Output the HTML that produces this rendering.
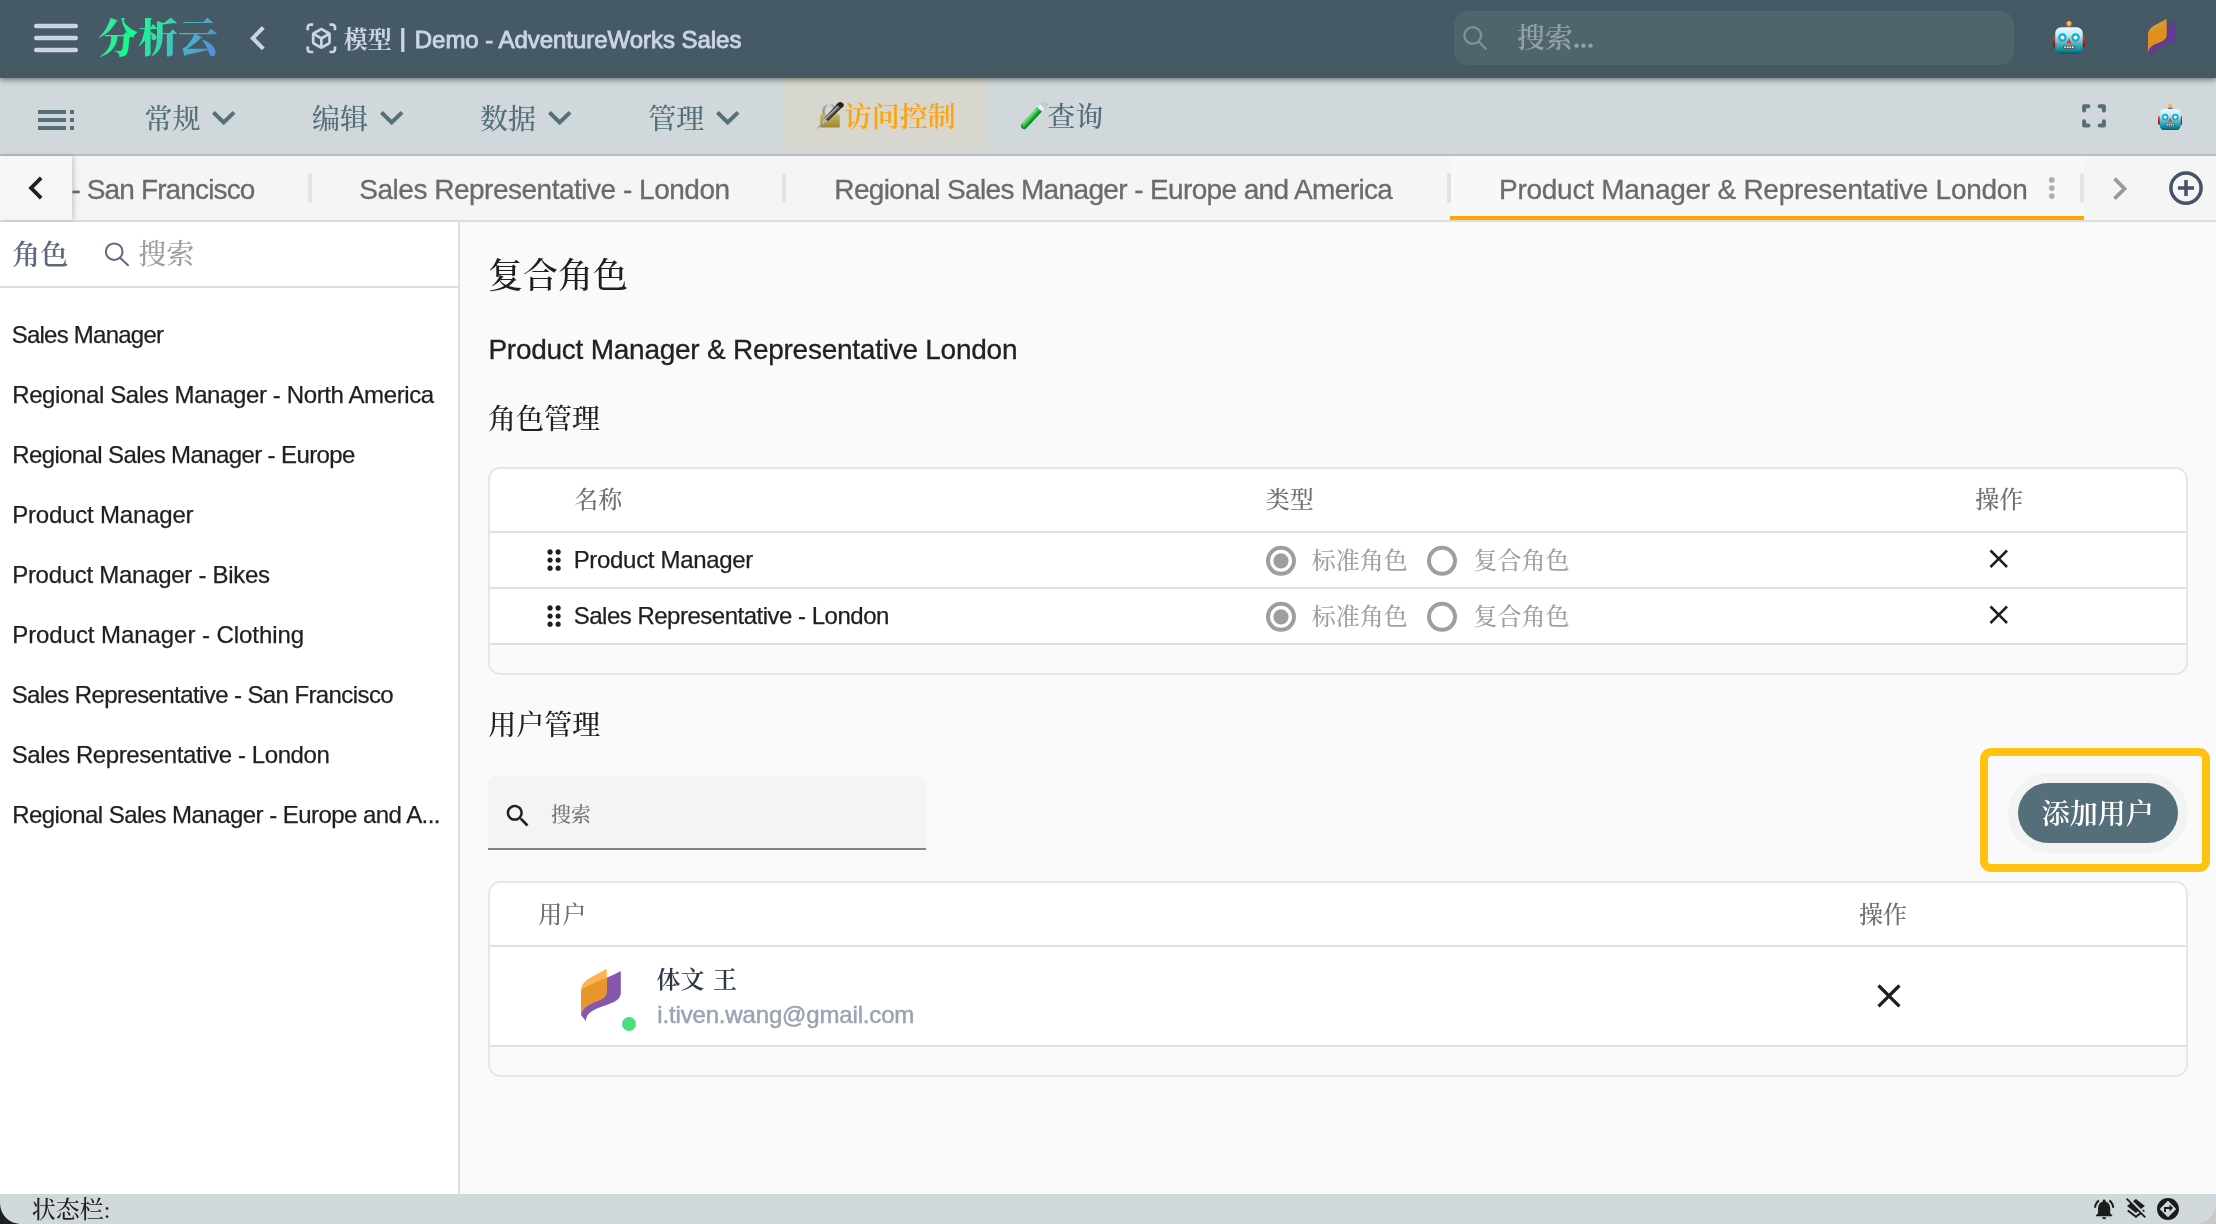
<!DOCTYPE html>
<html lang="zh-CN"><head><meta charset="utf-8"><title>模型 | Demo - AdventureWorks Sales</title>
<style>
html,body{margin:0;padding:0}
body{width:2216px;height:1224px;overflow:hidden;position:relative;background:#fafafa;font-family:"Liberation Sans","Noto Serif CJK SC",sans-serif}
#app{position:absolute;left:0;top:0;width:2216px;height:1224px;overflow:hidden;will-change:transform}
.ab{position:absolute;display:block}
.z6{position:absolute;left:0;top:0;z-index:6}
.lt{position:absolute;display:block;white-space:nowrap;line-height:1;font-family:"Liberation Sans","Noto Serif CJK SC",sans-serif}
.ck{position:absolute;display:block;white-space:nowrap;line-height:1;font-weight:500;font-family:"Liberation Serif","Noto Serif CJK SC",serif}
.tb{box-sizing:border-box;border:2px solid #e4e6ea;border-radius:12.500px;background:#fafafa;overflow:hidden}
.tb .hd,.tb .rw{background:#fff;border-bottom:2px solid #e0e0e0}
</style></head>
<body>
<div id="app">
<div class="ab" style="left:0;top:0;width:2216px;height:78px;background:#455a64;box-shadow:0 2px 6px rgba(0,0,0,.45);z-index:5"></div>
<div class="z6">
<svg class="ab" style="left:30px;top:20px" width="52" height="36" viewBox="30 20 52 36" fill="none" stroke="#cbd5e1" stroke-width="4.400" stroke-linecap="round"><path d="M36.200 26H75.800M36.200 38H75.800M36.200 50H75.800"/></svg>
<span id="logo" class="ck" style="left:98px;top:18px;font-size:40px;font-weight:900;line-height:42px;background:linear-gradient(115deg,#45dca8 0%,#16fb8d 28%,#2fe0a8 48%,#45b8c4 68%,#5a84dc 100%);-webkit-background-clip:text;background-clip:text;color:transparent;-webkit-text-fill-color:transparent">分析云</span>
<svg class="ab" style="left:246px;top:22px" width="24" height="32" viewBox="246 22 24 32" fill="none" stroke="#cbd5e1" stroke-width="4" stroke-linecap="butt" stroke-linejoin="miter"><path d="M263.300 27.500L252.800 38.200L263.300 48.800"/></svg>
<svg class="ab" style="left:304.64px;top:22.14px" width="32.73" height="32.73" viewBox="0 0 24 24" fill="#cbd5e1" ><path d="M3 4c0-.55.45-1 1-1h2V1H4C2.34 1 1 2.34 1 4v2h2V4zm0 16v-2H1v2c0 1.660 1.340 3 3 3h2v-2H4c-.55 0-1-.45-1-1zM20 1h-2v2h2c.55 0 1 .45 1 1v2h2V4c0-1.660-1.340-3-3-3zm1 19c0 .55-.45 1-1 1h-2v2h2c1.660 0 3-1.340 3-3v-2h-2v2zm-2-5.130V9.130c0-.72-.38-1.380-1-1.730l-5-2.880c-.31-.18-.65-.27-1-.27s-.69.09-1 .27L6 7.390c-.62.360-1 1.020-1 1.740v5.740c0 .72.38 1.380 1 1.730l5 2.880c.31.18.65.27 1 .27s.69-.09 1-.27l5-2.880c.62-.35 1-1.010 1-1.730zm-8 2.300l-4-2.300v-4.630l4 2.330v4.600zm1-6.330L8.040 8.530 12 6.250l3.960 2.280L12 10.840zm5 4.030l-4 2.300v-4.600l4-2.330v4.630z"/></svg>
<span id="c1" class="ck" style="left:343.70px;top:28.45px;font-size:24px;color:#cbd5e1;font-weight:700;">模型</span>
<span id="t2" class="lt" style="left:399.20px;top:26.44px;font-size:25px;color:#cbd5e1;letter-spacing:0.000px;font-weight:700;">|</span>
<span id="t3" class="lt" style="left:414.80px;top:27.58px;font-size:24px;color:#cbd5e1;letter-spacing:-0.042px;-webkit-text-stroke:0.9px #cbd5e1;">Demo - AdventureWorks Sales</span>
<div class="ab" style="left:1454px;top:11px;width:560px;height:54px;border-radius:14px;background:#50646e"></div>
<svg class="ab" style="left:1460px;top:22px" width="30" height="30" viewBox="1460 22 30 30" fill="none" stroke="#7f919b" stroke-width="2.300" stroke-linecap="round"><circle cx="1472.700" cy="35.500" r="8.300"/><path d="M1478.800 41.700L1485.800 48.700"/></svg>
<span id="c4" class="ck" style="left:1516.90px;top:24.80px;font-size:28px;color:#8fa1aa;font-weight:600;">搜索...</span>
<svg class="ab" style="left:2052.50px;top:21.00px" width="32.00" height="33.00" viewBox="0 0 36 36" preserveAspectRatio="none">
<defs><linearGradient id="rbh" x1="0" y1="0" x2="0" y2="1"><stop offset="0" stop-color="#e6fbfa"/><stop offset=".3" stop-color="#c2ecec"/><stop offset=".62" stop-color="#4fb3bd"/><stop offset=".85" stop-color="#0d8fa0"/><stop offset="1" stop-color="#02596a"/></linearGradient>
<radialGradient id="rba" cx=".5" cy=".35" r=".6"><stop offset="0" stop-color="#ffd54a"/><stop offset="1" stop-color="#ff8f00"/></radialGradient>
<linearGradient id="rbe" x1="0" y1="0" x2="0" y2="1"><stop offset="0" stop-color="#ff2d2d"/><stop offset="1" stop-color="#7a0c0c"/></linearGradient></defs>
<rect x="0" y="17" width="5" height="11.500" rx="2" fill="url(#rbe)"/><rect x="31" y="17" width="5" height="11.500" rx="2" fill="url(#rbe)"/>
<path d="M13.800 9.500Q13.800 4.800 18 4.800Q22.200 4.800 22.200 9.500Z" fill="#7b4fa8"/>
<circle cx="18" cy="2.900" r="2.900" fill="url(#rba)"/>
<rect x="2.500" y="6.800" width="31" height="29.200" rx="6.500" fill="url(#rbh)"/>
<circle cx="10.600" cy="18" r="4.700" fill="#08a9d8"/><circle cx="25.400" cy="18" r="4.700" fill="#08a9d8"/>
<circle cx="10.600" cy="18" r="2.300" fill="#fff"/><circle cx="25.400" cy="18" r="2.300" fill="#fff"/>
<path d="M18 18.500 L21 24.500 L15 24.500Z" fill="#ee3344"/>
<rect x="11.500" y="27" width="13" height="3.200" rx=".8" fill="#5a3a30"/>
<rect x="12.700" y="27.600" width="2" height="2" fill="#f2ece6"/><rect x="15.600" y="27.600" width="2" height="2" fill="#f2ece6"/><rect x="18.500" y="27.600" width="2" height="2" fill="#f2ece6"/><rect x="21.400" y="27.600" width="2" height="2" fill="#f2ece6"/>
</svg>
<svg class="ab" style="left:2147.50px;top:18.50px" width="28.70" height="37.30" viewBox="0 0 580 760" preserveAspectRatio="none">
<defs><clipPath id="lfc1"><path d="M375 0C250 75 100 120 30 220C10 250 0 280 0 310L0 670C10 600 60 550 130 515C230 465 375 440 375 330Z"/></clipPath></defs>
<path d="M580 30C455 105 300 150 200 200C100 250 0 280 0 330L0 670L70 760C70 680 130 620 250 570C400 510 580 480 580 350Z" fill="#643a93"/><path d="M375 0C250 75 100 120 30 220C10 250 0 280 0 310L0 670C10 600 60 550 130 515C230 465 375 440 375 330Z" fill="#db9a30"/><path d="M580 30C455 105 300 150 200 200C100 250 0 280 0 330L0 670L70 760C70 680 130 620 250 570C400 510 580 480 580 350Z" fill="#e0901e" clip-path="url(#lfc1)"/>
</svg>
</div>
<div class="ab" style="left:0;top:78px;width:2216px;height:76px;background:#d0d8db"></div>
<div class="ab" style="left:0;top:154px;width:2216px;height:2px;background:#b4bfc4"></div>
<div class="ab" style="left:784px;top:78px;width:204px;height:73.500px;background:#d7d7cf"></div>
<svg class="ab" style="left:32.00px;top:96.00px" width="48.00" height="48.00" viewBox="0 0 24 24" fill="#546e7a" ><path d="M3 9h14V7H3v2zm0 4h14v-2H3v2zm0 4h14v-2H3v2zm16 0h2v-2h-2v2zm0-10v2h2V7h-2zm0 6h2v-2h-2v2z"/></svg>
<span id="c5" class="ck" style="left:144.50px;top:105.50px;font-size:28px;color:#546e7a;font-weight:500;">常规</span>
<svg class="ab" style="left:210.30px;top:107.400px" width="28" height="20" viewBox="0 0 28 20" fill="none" stroke="#546e7a" stroke-width="4"><path d="M3.400 5.400L13.700 15.500L24 5.400"/></svg>
<span id="c6" class="ck" style="left:312.10px;top:105.50px;font-size:28px;color:#546e7a;font-weight:500;">编辑</span>
<svg class="ab" style="left:377.90px;top:107.400px" width="28" height="20" viewBox="0 0 28 20" fill="none" stroke="#546e7a" stroke-width="4"><path d="M3.400 5.400L13.700 15.500L24 5.400"/></svg>
<span id="c7" class="ck" style="left:479.90px;top:105.50px;font-size:28px;color:#546e7a;font-weight:500;">数据</span>
<svg class="ab" style="left:545.70px;top:107.400px" width="28" height="20" viewBox="0 0 28 20" fill="none" stroke="#546e7a" stroke-width="4"><path d="M3.400 5.400L13.700 15.500L24 5.400"/></svg>
<span id="c8" class="ck" style="left:648.20px;top:105.50px;font-size:28px;color:#546e7a;font-weight:500;">管理</span>
<svg class="ab" style="left:714.00px;top:107.400px" width="28" height="20" viewBox="0 0 28 20" fill="none" stroke="#546e7a" stroke-width="4"><path d="M3.400 5.400L13.700 15.500L24 5.400"/></svg>
<span id="c9" class="ck" style="left:843.80px;top:104.15px;font-size:28px;color:#ffa30a;font-weight:600;">访问控制</span>
<span id="c10" class="ck" style="left:1047.20px;top:104.15px;font-size:28px;color:#546e7a;font-weight:500;">查询</span>
<svg class="ab" style="left:816px;top:101px" width="30" height="30" viewBox="0 0 30 30">
<defs><linearGradient id="lkb" x1="0" y1="0" x2="0" y2="1"><stop offset="0" stop-color="#cdb75a"/><stop offset="1" stop-color="#9c862f"/></linearGradient>
<linearGradient id="lks" x1="0" y1="0" x2="1" y2="0"><stop offset="0" stop-color="#8f979e"/><stop offset=".45" stop-color="#d3d9de"/><stop offset="1" stop-color="#8f979e"/></linearGradient>
<linearGradient id="lkp" x1="0" y1="0" x2="1" y2="1"><stop offset=".41" stop-color="#2b2725"/><stop offset=".47" stop-color="#b8b8b8"/><stop offset=".53" stop-color="#4c4744"/><stop offset=".62" stop-color="#1d1a18"/></linearGradient></defs>
<path d="M7.700 15V9.600a5.700 5.700 0 0 1 11.400 0V15" fill="none" stroke="url(#lks)" stroke-width="2.500"/>
<rect x="4.200" y="13.600" width="19.600" height="13" rx="1.200" fill="url(#lkb)"/>
<path d="M1.100 27.600L8.200 17.600L11.800 19.800Z" fill="#aab6c2"/>
<path d="M1.100 27.600L7 21.800" stroke="#6c7680" stroke-width=".7"/>
<path d="M22.200 1.900C24.600 .2 28.700 2.500 27.300 5.300L12 19.900L8.200 17.200Z" fill="url(#lkp)"/>
<path d="M22.200 1.900C24.600 .2 28.700 2.500 27.300 5.300L25.400 7.100L20.100 3.700Z" fill="#23201e"/>
</svg>
<svg class="ab" style="left:1019px;top:100px" width="31" height="31" viewBox="0 0 31 31">
<path d="M5.200 26L23.500 6.400" stroke="#c3cfce" stroke-width="7" stroke-linecap="round"/>
<path d="M5.200 26L20.300 9.800" stroke="#0d8f27" stroke-width="6.200" stroke-linecap="round"/>
<path d="M4.600 25.400L19.400 9.500" stroke="#1fd03e" stroke-width="3" stroke-linecap="round"/>
<path d="M4.300 23.800L17.700 9.400" stroke="#b9ffc8" stroke-width="1" stroke-linecap="round"/>
<path d="M20.600 9.500L23.800 6.100" stroke="#e6ecec" stroke-width="6.600"/>
<path d="M19.700 8.800L22.600 5.700" stroke="#ffffff" stroke-width="1.600"/>
<path d="M20.800 3L27.100 8.900" stroke="#d5c6d2" stroke-width="1.800" stroke-linecap="round"/>
<circle cx="26.200" cy="2.800" r=".9" fill="#7fe08f"/><circle cx="28" cy="5" r=".9" fill="#7fe08f"/>
</svg>
<svg class="ab" style="left:2080px;top:102px" width="28" height="28" viewBox="2080 102 28 28" fill="none" stroke="#546e7a" stroke-width="4" stroke-linecap="round" stroke-linejoin="round"><path d="M2084.100 110.500V106.200H2088.400M2099.600 106.200H2103.900V110.500M2103.900 121.300V125.600H2099.600M2088.400 125.600H2084.100V121.300"/></svg>
<svg class="ab" style="left:2157.80px;top:103.80px" width="24.50" height="26.20" viewBox="0 0 36 36" preserveAspectRatio="none">
<defs><linearGradient id="rbh2" x1="0" y1="0" x2="0" y2="1"><stop offset="0" stop-color="#e6fbfa"/><stop offset=".3" stop-color="#c2ecec"/><stop offset=".62" stop-color="#4fb3bd"/><stop offset=".85" stop-color="#0d8fa0"/><stop offset="1" stop-color="#02596a"/></linearGradient>
<radialGradient id="rba2" cx=".5" cy=".35" r=".6"><stop offset="0" stop-color="#ffd54a"/><stop offset="1" stop-color="#ff8f00"/></radialGradient>
<linearGradient id="rbe2" x1="0" y1="0" x2="0" y2="1"><stop offset="0" stop-color="#ff2d2d"/><stop offset="1" stop-color="#7a0c0c"/></linearGradient></defs>
<rect x="0" y="17" width="5" height="11.500" rx="2" fill="url(#rbe2)"/><rect x="31" y="17" width="5" height="11.500" rx="2" fill="url(#rbe2)"/>
<path d="M13.800 9.500Q13.800 4.800 18 4.800Q22.200 4.800 22.200 9.500Z" fill="#7b4fa8"/>
<circle cx="18" cy="2.900" r="2.900" fill="url(#rba2)"/>
<rect x="2.500" y="6.800" width="31" height="29.200" rx="6.500" fill="url(#rbh2)"/>
<circle cx="10.600" cy="18" r="4.700" fill="#08a9d8"/><circle cx="25.400" cy="18" r="4.700" fill="#08a9d8"/>
<circle cx="10.600" cy="18" r="2.300" fill="#fff"/><circle cx="25.400" cy="18" r="2.300" fill="#fff"/>
<path d="M18 18.500 L21 24.500 L15 24.500Z" fill="#ee3344"/>
<rect x="11.500" y="27" width="13" height="3.200" rx=".8" fill="#5a3a30"/>
<rect x="12.700" y="27.600" width="2" height="2" fill="#f2ece6"/><rect x="15.600" y="27.600" width="2" height="2" fill="#f2ece6"/><rect x="18.500" y="27.600" width="2" height="2" fill="#f2ece6"/><rect x="21.400" y="27.600" width="2" height="2" fill="#f2ece6"/>
</svg>
<div class="ab" style="left:0;top:156px;width:2216px;height:64px;background:#f5f5f5"></div>
<div class="ab" style="left:0;top:220px;width:2216px;height:2px;background:#dcdcdc"></div>
<div class="ab" style="left:1451px;top:156px;width:633px;height:64px;background:#f8f8f8"></div>
<div class="ab" style="left:1450px;top:216px;width:634px;height:4px;background:#ffa600"></div>
<div class="ab" style="left:307.6px;top:173.200px;width:4px;height:29.600px;background:#e3e3e3;border-radius:2px"></div>
<div class="ab" style="left:782px;top:173.200px;width:4px;height:29.600px;background:#e3e3e3;border-radius:2px"></div>
<div class="ab" style="left:1446.8px;top:173.200px;width:4px;height:29.600px;background:#e3e3e3;border-radius:2px"></div>
<div class="ab" style="left:2079.9px;top:173.200px;width:4px;height:29.600px;background:#e3e3e3;border-radius:2px"></div>
<span id="t11" class="lt" style="left:71.40px;top:176.30px;font-size:28px;color:#6b6b6b;letter-spacing:-0.864px;-webkit-text-stroke:0.3px #6b6b6b;">- San Francisco</span>
<span id="t12" class="lt" style="left:359.30px;top:176.30px;font-size:28px;color:#6b6b6b;letter-spacing:-0.489px;-webkit-text-stroke:0.3px #6b6b6b;">Sales Representative - London</span>
<span id="t13" class="lt" style="left:834.30px;top:176.30px;font-size:28px;color:#6b6b6b;letter-spacing:-0.633px;-webkit-text-stroke:0.3px #6b6b6b;">Regional Sales Manager - Europe and America</span>
<span id="t14" class="lt" style="left:1499.00px;top:176.30px;font-size:28px;color:#6b6b6b;letter-spacing:-0.258px;-webkit-text-stroke:0.3px #6b6b6b;">Product Manager &amp; Representative London</span>
<div class="ab" style="left:0;top:156px;width:72px;height:64px;background:#f6f6f6;box-shadow:2px 0 5px rgba(0,0,0,.18)"></div>
<svg class="ab" style="left:13.47px;top:165.40px" width="45.99" height="45.99" viewBox="0 0 24 24" fill="#212121" ><path d="M15.41 7.41L14 6l-6 6 6 6 1.41-1.41L10.83 12z"/></svg>
<svg class="ab" style="left:2046px;top:174px" width="12" height="28" viewBox="2046 174 12 28" fill="#b0b0b0"><circle cx="2051.800" cy="180" r="2.900"/><circle cx="2051.800" cy="188.050" r="2.900"/><circle cx="2051.800" cy="196.100" r="2.900"/></svg>
<svg class="ab" style="left:2096.77px;top:165.56px" width="45.34" height="45.34" viewBox="0 0 24 24" fill="#999999" ><path d="M10 6L8.59 7.41 13.17 12l-4.58 4.59L10 18l6-6z"/></svg>
<svg class="ab" style="left:2166px;top:168px" width="40" height="40" viewBox="2166 168 40 40" fill="none" stroke="#465268" stroke-width="3.500"><circle cx="2186" cy="188.050" r="15.100"/><path d="M2186 180V196.100M2177.900 188.050H2194.100"/></svg>
<div class="ab" style="left:0;top:222px;width:458px;height:972px;background:#fff"></div>
<div class="ab" style="left:458px;top:222px;width:2px;height:972px;background:#dedede"></div>
<div class="ab" style="left:0;top:286px;width:458px;height:2px;background:#dedede"></div>
<span id="c15" class="ck" style="left:12.20px;top:241.75px;font-size:28px;color:#5f687e;font-weight:600;">角色</span>
<svg class="ab" style="left:102px;top:240px" width="30" height="30" viewBox="102 240 30 30" fill="none" stroke="#5f687e" stroke-width="2" stroke-linecap="round"><circle cx="114.200" cy="251.700" r="8.300"/><path d="M120.600 258.200L128 265.200"/></svg>
<span id="c16" class="ck" style="left:138.20px;top:241.15px;font-size:28px;color:#9e9e9e;">搜索</span>
<span id="t17" class="lt" style="left:11.70px;top:323.28px;font-size:24px;color:#1f1f1f;letter-spacing:-0.758px;-webkit-text-stroke:0.25px #1f1f1f;">Sales Manager</span>
<span id="t18" class="lt" style="left:12.20px;top:383.28px;font-size:24px;color:#1f1f1f;letter-spacing:-0.384px;-webkit-text-stroke:0.25px #1f1f1f;">Regional Sales Manager - North America</span>
<span id="t19" class="lt" style="left:12.20px;top:443.28px;font-size:24px;color:#1f1f1f;letter-spacing:-0.613px;-webkit-text-stroke:0.25px #1f1f1f;">Regional Sales Manager - Europe</span>
<span id="t20" class="lt" style="left:12.20px;top:503.28px;font-size:24px;color:#1f1f1f;letter-spacing:-0.193px;-webkit-text-stroke:0.25px #1f1f1f;">Product Manager</span>
<span id="t21" class="lt" style="left:12.20px;top:563.28px;font-size:24px;color:#1f1f1f;letter-spacing:-0.282px;-webkit-text-stroke:0.25px #1f1f1f;">Product Manager - Bikes</span>
<span id="t22" class="lt" style="left:12.20px;top:623.28px;font-size:24px;color:#1f1f1f;letter-spacing:-0.064px;-webkit-text-stroke:0.25px #1f1f1f;">Product Manager - Clothing</span>
<span id="t23" class="lt" style="left:11.70px;top:683.28px;font-size:24px;color:#1f1f1f;letter-spacing:-0.597px;-webkit-text-stroke:0.25px #1f1f1f;">Sales Representative - San Francisco</span>
<span id="t24" class="lt" style="left:11.70px;top:743.28px;font-size:24px;color:#1f1f1f;letter-spacing:-0.407px;-webkit-text-stroke:0.25px #1f1f1f;">Sales Representative - London</span>
<span id="t25" class="lt" style="left:12.20px;top:803.28px;font-size:24px;color:#1f1f1f;letter-spacing:-0.546px;-webkit-text-stroke:0.25px #1f1f1f;">Regional Sales Manager - Europe and A...</span>
<div class="ab" style="left:460px;top:222px;width:1756px;height:972px;background:#fafafa"></div>
<span id="c26" class="ck" style="left:488.10px;top:258.50px;font-size:35px;color:#1f1f1f;font-weight:500;">复合角色</span>
<span id="t27" class="lt" style="left:488.40px;top:335.80px;font-size:28px;color:#212121;letter-spacing:-0.250px;-webkit-text-stroke:0.3px #212121;">Product Manager &amp; Representative London</span>
<span id="c28" class="ck" style="left:487.90px;top:406.40px;font-size:28px;color:#1f1f1f;font-weight:500;">角色管理</span>
<div class="ab tb" style="left:488px;top:467px;width:1700px;height:208px"><div class="hd" style="height:62px"></div><div class="rw" style="height:54px"></div><div class="rw" style="height:54px"></div></div>
<span id="c29" class="ck" style="left:574.20px;top:487.70px;font-size:24px;color:#707070;font-weight:500;">名称</span>
<span id="c30" class="ck" style="left:1265.70px;top:488.20px;font-size:24px;color:#707070;font-weight:500;">类型</span>
<span id="c31" class="ck" style="left:1975.20px;top:488.10px;font-size:24px;color:#707070;font-weight:500;">操作</span>
<svg class="ab" style="left:537.98px;top:543.83px" width="32.21" height="32.21" viewBox="0 0 24 24" fill="#1f1f1f" ><path d="M11 18c0 1.1-.9 2-2 2s-2-.9-2-2 .9-2 2-2 2 .9 2 2zm-2-8c-1.1 0-2 .9-2 2s.9 2 2 2 2-.9 2-2-.9-2-2-2zm0-6c-1.1 0-2 .9-2 2s.9 2 2 2 2-.9 2-2-.9-2-2-2zm6 4c1.1 0 2-.9 2-2s-.9-2-2-2-2 .9-2 2 .9 2 2 2zm0 2c-1.1 0-2 .9-2 2s.9 2 2 2 2-.9 2-2-.9-2-2-2zm0 6c-1.1 0-2 .9-2 2s.9 2 2 2 2-.9 2-2-.9-2-2-2z"/></svg>
<span id="t32" class="lt" style="left:573.70px;top:548.18px;font-size:24px;color:#1f1f1f;letter-spacing:-0.321px;-webkit-text-stroke:0.25px #1f1f1f;">Product Manager</span>
<svg class="ab" style="left:1264px;top:544px" width="34" height="34" viewBox="0 0 34 34"><circle cx="17" cy="16.800" r="13" fill="none" stroke="#9e9e9e" stroke-width="4"/><circle cx="17" cy="16.800" r="7.600" fill="#9e9e9e"/></svg>
<span id="c33" class="ck" style="left:1311.70px;top:549.30px;font-size:24px;color:#a0a0a0;">标准角色</span>
<svg class="ab" style="left:1425px;top:544px" width="34" height="34" viewBox="0 0 34 34"><circle cx="17" cy="16.800" r="13" fill="none" stroke="#9e9e9e" stroke-width="4"/></svg>
<span id="c34" class="ck" style="left:1473.50px;top:549.30px;font-size:24px;color:#a0a0a0;">复合角色</span>
<svg class="ab" style="left:1983.23px;top:543.43px" width="31.54" height="31.54" viewBox="0 0 24 24" fill="#1f1f1f" ><path d="M19 6.41L17.59 5 12 10.59 6.41 5 5 6.41 10.59 12 5 17.59 6.41 19 12 13.41 17.59 19 19 17.59 13.41 12z"/></svg>
<svg class="ab" style="left:537.98px;top:599.83px" width="32.21" height="32.21" viewBox="0 0 24 24" fill="#1f1f1f" ><path d="M11 18c0 1.1-.9 2-2 2s-2-.9-2-2 .9-2 2-2 2 .9 2 2zm-2-8c-1.1 0-2 .9-2 2s.9 2 2 2 2-.9 2-2-.9-2-2-2zm0-6c-1.1 0-2 .9-2 2s.9 2 2 2 2-.9 2-2-.9-2-2-2zm6 4c1.1 0 2-.9 2-2s-.9-2-2-2-2 .9-2 2 .9 2 2 2zm0 2c-1.1 0-2 .9-2 2s.9 2 2 2 2-.9 2-2-.9-2-2-2zm0 6c-1.1 0-2 .9-2 2s.9 2 2 2 2-.9 2-2-.9-2-2-2z"/></svg>
<span id="t35" class="lt" style="left:573.70px;top:604.18px;font-size:24px;color:#1f1f1f;letter-spacing:-0.496px;-webkit-text-stroke:0.25px #1f1f1f;">Sales Representative - London</span>
<svg class="ab" style="left:1264px;top:600px" width="34" height="34" viewBox="0 0 34 34"><circle cx="17" cy="16.800" r="13" fill="none" stroke="#9e9e9e" stroke-width="4"/><circle cx="17" cy="16.800" r="7.600" fill="#9e9e9e"/></svg>
<span id="c36" class="ck" style="left:1311.70px;top:605.30px;font-size:24px;color:#a0a0a0;">标准角色</span>
<svg class="ab" style="left:1425px;top:600px" width="34" height="34" viewBox="0 0 34 34"><circle cx="17" cy="16.800" r="13" fill="none" stroke="#9e9e9e" stroke-width="4"/></svg>
<span id="c37" class="ck" style="left:1473.50px;top:605.30px;font-size:24px;color:#a0a0a0;">复合角色</span>
<svg class="ab" style="left:1983.23px;top:599.43px" width="31.54" height="31.54" viewBox="0 0 24 24" fill="#1f1f1f" ><path d="M19 6.41L17.59 5 12 10.59 6.41 5 5 6.41 10.59 12 5 17.59 6.41 19 12 13.41 17.59 19 19 17.59 13.41 12z"/></svg>
<span id="c38" class="ck" style="left:488.20px;top:712.45px;font-size:28px;color:#1f1f1f;font-weight:500;">用户管理</span>
<div class="ab" style="left:488px;top:776px;width:438px;height:74px;background:#f4f4f4;border-radius:8px 8px 0 0;border-bottom:2px solid #848484;box-sizing:border-box"></div>
<svg class="ab" style="left:503.08px;top:801.28px" width="29.78" height="29.78" viewBox="0 0 24 24" fill="#1f1f1f" ><path d="M15.5 14h-.79l-.28-.27C15.41 12.59 16 11.11 16 9.5 16 5.91 13.09 3 9.5 3S3 5.91 3 9.5 5.91 16 9.5 16c1.61 0 3.09-.59 4.23-1.57l.27.28v.79l5 4.99L20.49 19l-4.99-5zm-6 0C7.01 14 5 11.99 5 9.5S7.01 5 9.5 5 14 7.01 14 9.5 11.99 14 9.5 14z"/></svg>
<span id="c39" class="ck" style="left:551.00px;top:804.70px;font-size:20px;color:#757575;font-weight:500;">搜索</span>
<div class="ab" style="left:1980px;top:748px;width:230px;height:124px;border:8px solid #ffc20e;border-radius:11px;box-sizing:border-box"></div>
<div class="ab" style="left:2008px;top:773px;width:180px;height:80px;border-radius:40px;background:#f3f3f3"></div>
<div class="ab" style="left:2018px;top:783px;width:160px;height:60px;border-radius:30px;background:#546e7a"></div>
<span id="c40" class="ck" style="left:2041.80px;top:801.00px;font-size:28px;color:#ffffff;font-weight:600;">添加用户</span>
<div class="ab tb" style="left:488px;top:881px;width:1700px;height:196px"><div class="hd" style="height:62px"></div><div class="rw" style="height:98px"></div></div>
<span id="c41" class="ck" style="left:538.20px;top:903.25px;font-size:24px;color:#707070;font-weight:500;">用户</span>
<span id="c42" class="ck" style="left:1858.90px;top:902.85px;font-size:24px;color:#707070;font-weight:500;">操作</span>
<svg class="ab" style="left:581.00px;top:969.00px" width="39.80" height="52.10" viewBox="0 0 580 760" preserveAspectRatio="none">
<defs><clipPath id="lfc2"><path d="M375 0C250 75 100 120 30 220C10 250 0 280 0 310L0 670C10 600 60 550 130 515C230 465 375 440 375 330Z"/></clipPath></defs>
<path d="M580 30C455 105 300 150 200 200C100 250 0 280 0 330L0 670L70 760C70 680 130 620 250 570C400 510 580 480 580 350Z" fill="#8558ad"/><path d="M375 0C250 75 100 120 30 220C10 250 0 280 0 310L0 670C10 600 60 550 130 515C230 465 375 440 375 330Z" fill="#fdb44e"/><path d="M580 30C455 105 300 150 200 200C100 250 0 280 0 330L0 670L70 760C70 680 130 620 250 570C400 510 580 480 580 350Z" fill="#e8962a" clip-path="url(#lfc2)"/>
</svg>
<div class="ab" style="left:621.800px;top:1016.800px;width:14.400px;height:14.400px;border-radius:50%;background:#4ade80"></div>
<span id="c43" class="ck" style="left:656.60px;top:968.25px;font-size:24px;color:#2d3748;font-weight:600;word-spacing:2.500px;">体文 王</span>
<span id="t44" class="lt" style="left:657.30px;top:1003.38px;font-size:24px;color:#9aa3b3;letter-spacing:-0.162px;-webkit-text-stroke:0.5px #9aa3b3;">i.tiven.wang@gmail.com</span>
<svg class="ab" style="left:1869.18px;top:976.18px" width="39.94" height="39.94" viewBox="0 0 24 24" fill="#1f1f1f" ><path d="M19 6.41L17.59 5 12 10.59 6.41 5 5 6.41 10.59 12 5 17.59 6.41 19 12 13.41 17.59 19 19 17.59 13.41 12z"/></svg>
<div class="ab" style="left:0;top:1194px;width:2216px;height:30px;background:#d0d8db"></div>
<span id="c45" class="ck" style="left:31.70px;top:1197.70px;font-size:24px;color:#1f1f1f;font-weight:500;">状态栏:</span>
<svg class="ab" style="left:2091.84px;top:1196.87px" width="24.31" height="24.31" viewBox="0 0 24 24" fill="#1c1c1c" ><path d="M7.58 4.08L6.15 2.65C3.75 4.48 2.17 7.3 2.03 10.5h2c.15-2.650 1.510-4.970 3.550-6.420zm12.390 6.420h2c-.15-3.200-1.730-6.020-4.120-7.850l-1.420 1.430c2.020 1.450 3.390 3.770 3.540 6.420zM18 11c0-3.070-1.640-5.640-4.500-6.320V4c0-.83-.67-1.500-1.500-1.500s-1.500.67-1.500 1.500v.68C7.630 5.360 6 7.920 6 11v5l-2 2v1h16v-1l-2-2v-5zm-6 11c.14 0 .27-.01.4-.04.65-.14 1.180-.58 1.440-1.180.1-.24.15-.5.15-.78h-4c.01 1.100.9 2 2.010 2z"/></svg>
<svg class="ab" style="left:2124.01px;top:1197.01px" width="23.88" height="23.88" viewBox="0 0 24 24" fill="#1c1c1c" ><path d="M19.81 14.99l1.190-.92-1.430-1.430-1.190.92 1.430 1.430zm-.45-4.720L21 9l-9-7-2.910 2.270 7.870 7.880 2.400-1.880zM3.270 1L2 2.270l4.220 4.220L3 9l1.630 1.270L12 16l2.100-1.630 1.430 1.430L12 18.540l-7.370-5.730L3 14.070l9 7 4.950-3.850L20.730 21 22 19.730 3.270 1z"/></svg>
<svg class="ab" style="left:2157px;top:1198px" width="22" height="22" viewBox="1 1 22 22" fill="#1c1c1c"><path d="M12 1C5.9 1 1 5.9 1 12s4.9 11 11 11 11-4.9 11-11S18.1 1 12 1zm7.730 11.580l-7.190 7.220c-.35.27-.79.27-1.150 0L4.200 12.580c-.27-.36-.27-.8 0-1.160l7.190-7.220c.35-.27.79-.27 1.150 0l7.190 7.220c.36.270.36.8 0 1.160z"/><path d="M13.5 10H8v5h2v-3h3.500v2.500L17 11l-3.500-3.500V10z"/></svg>
<svg class="ab" style="left:0;top:1202px" width="22" height="22" viewBox="0 0 22 22"><path d="M0 0V22H22C9 22 0 13 0 0Z" fill="#1d2024"/></svg>
<svg class="ab" style="left:2194px;top:1202px" width="22" height="22" viewBox="0 0 22 22"><path d="M22 0V22H0C13 22 22 13 22 0Z" fill="#c9c9c9"/></svg>
</div>
</body></html>
